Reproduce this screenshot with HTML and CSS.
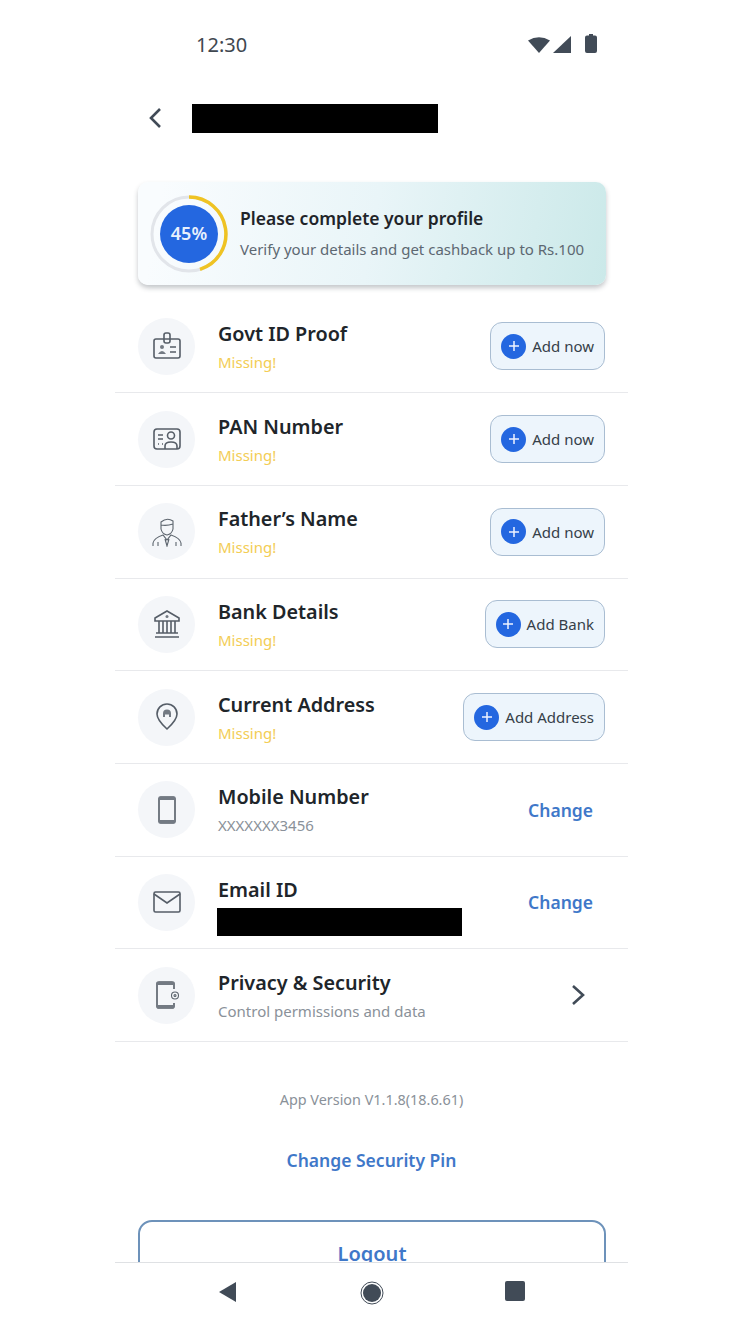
FILE: index.html
```html
<!DOCTYPE html>
<html lang="en">
<head>
<meta charset="utf-8">
<title>Profile</title>
<link rel="stylesheet" href="styles.css">
</head>
<body>
<div class="phone">
  <main class="content">
    <div class="status">
      <span class="time">12:30</span>
      <span class="status-icons">
        <svg width="22" height="16" viewBox="0 0 22 16"><path class="fill" d="M0 3.5Q11-3 22 3.5L11 16z"/></svg>
        <svg width="18" height="17" viewBox="0 0 18 17"><path class="fill" d="M18 0V17H0z"/></svg>
        <svg class="batt" width="12" height="19" viewBox="0 0 12 19"><path class="fill" d="M4 0H8V1.500H10Q12 1.500 12 3.500V17Q12 19 10 19H2Q0 19 0 17V3.500Q0 1.500 2 1.500H4z"/></svg>
      </span>
    </div>
    <header class="topbar">
      <svg class="back" width="16" height="24" viewBox="0 0 16 24"><path class="line2" d="M12 3L3 12L12 21"/></svg>
      <div class="redact title-redact"></div>
    </header>
    <section class="promo">
      <div class="ring">
        <svg width="80" height="80" viewBox="0 0 80 80">
          <circle class="ring-track" cx="40" cy="40" r="37"/>
          <circle class="ring-core" cx="40" cy="40" r="29"/>
          <path class="ring-fg" d="M40 3A37 37 0 0 1 51 75.300"/>
        </svg>
        <span class="ring-num">45%</span>
      </div>
      <div class="promo-text">
        <div class="promo-title">Please complete your profile</div>
        <div class="promo-sub">Verify your details and get cashback up to Rs.100</div>
      </div>
    </section>
    <ul class="list">
      <li class="row">
        <span class="ico"><svg width="30" height="30" viewBox="0 0 30 30"><rect class="line" x="2" y="8" width="26" height="19" rx="2"/><rect class="line" x="12" y="2" width="6" height="10" rx="2"/><circle class="dot" cx="10" cy="16" r="2"/><path class="dot" d="M6 23Q10 17 14 23z"/><path class="line" d="M18 16H24M18 21H24"/></svg></span>
        <div class="info"><div class="name">Govt ID Proof</div><div class="missing">Missing!</div></div>
        <a class="add"><span class="plus"><svg width="12" height="12" viewBox="0 0 12 12"><path class="plus-mark" d="M6 1V11M1 6H11"/></svg></span>Add now</a>
      </li>
      <li class="row">
        <span class="ico"><svg width="30" height="30" viewBox="0 0 30 30"><rect class="line" x="2" y="5" width="26" height="20" rx="3"/><path class="line" d="M6 11H11M6 15H11M6 20H7M10 20H11"/><circle class="line" cx="19" cy="11.500" r="3.500"/><path class="line" d="M13 25V22Q13 18 19 18Q25 18 25 22V25"/></svg></span>
        <div class="info"><div class="name">PAN Number</div><div class="missing">Missing!</div></div>
        <a class="add"><span class="plus"><svg width="12" height="12" viewBox="0 0 12 12"><path class="plus-mark" d="M6 1V11M1 6H11"/></svg></span>Add now</a>
      </li>
      <li class="row">
        <span class="ico"><svg width="30" height="30" viewBox="0 0 30 30"><path class="thin" d="M9 5Q15 0 21 4V12Q20 17 15 18Q10 17 9 12zM9 8Q15 9 21 7"/><path class="thin" d="M1 29V26Q2 21 11 18L15 23L19 18Q28 21 29 26V29M6 29V25M24 29V25M13 22L15 29L17 22"/></svg></span>
        <div class="info"><div class="name">Father’s Name</div><div class="missing">Missing!</div></div>
        <a class="add"><span class="plus"><svg width="12" height="12" viewBox="0 0 12 12"><path class="plus-mark" d="M6 1V11M1 6H11"/></svg></span>Add now</a>
      </li>
      <li class="row">
        <span class="ico"><svg width="30" height="30" viewBox="0 0 30 30"><path class="line" d="M15 2L27 9V12H3V9zM7 12V24M11 12V24M15 12V24M19 12V24M23 12V24M4 24H26M3 28H27"/><circle class="dot" cx="15" cy="7.500" r="1.500"/></svg></span>
        <div class="info"><div class="name">Bank Details</div><div class="missing">Missing!</div></div>
        <a class="add"><span class="plus"><svg width="12" height="12" viewBox="0 0 12 12"><path class="plus-mark" d="M6 1V11M1 6H11"/></svg></span>Add Bank</a>
      </li>
      <li class="row">
        <span class="ico"><svg width="30" height="30" viewBox="0 0 30 30"><path class="line" d="M15 27Q5 18 5 12A10 10 0 0 1 25 12Q25 18 15 27z"/><path class="dot" d="M11 11.500Q11 7.500 15 7.500Q19 7.500 19 11.500V15H17V12.500H13V15H11z"/></svg></span>
        <div class="info"><div class="name">Current Address</div><div class="missing">Missing!</div></div>
        <a class="add"><span class="plus"><svg width="12" height="12" viewBox="0 0 12 12"><path class="plus-mark" d="M6 1V11M1 6H11"/></svg></span>Add Address</a>
      </li>
      <li class="row">
        <span class="ico"><svg width="30" height="30" viewBox="0 0 30 30"><rect class="line" x="7" y="2" width="16" height="26" rx="1.500"/><path class="dot" d="M7 2H23V5H7zM7 25H23V28H7z"/></svg></span>
        <div class="info"><div class="name">Mobile Number</div><div class="value">XXXXXXX3456</div></div>
        <a class="link">Change</a>
      </li>
      <li class="row">
        <span class="ico"><svg width="30" height="30" viewBox="0 0 30 30"><rect class="line" x="2" y="5" width="26" height="20" rx="1.500"/><path class="line" d="M2 7L15 16L28 7"/></svg></span>
        <div class="info"><div class="name">Email ID</div><div class="redact email-redact"></div></div>
        <a class="link">Change</a>
      </li>
      <li class="row">
        <span class="ico"><svg width="30" height="30" viewBox="0 0 30 30"><path class="line" d="M22 9V3.500Q22 2 20 2H7Q5 2 5 3.500V26.500Q5 28 7 28H20Q22 28 22 26.500V23"/><path class="dot" d="M5 2H22V5H5zM5 25H22V28H5z"/><circle class="thin" cx="23" cy="15.500" r="3.500"/><circle class="thin" cx="23" cy="15.500" r="1"/></svg></span>
        <div class="info"><div class="name">Privacy &amp; Security</div><div class="value">Control permissions and data</div></div>
        <svg class="chev" width="16" height="24" viewBox="0 0 16 24"><path class="line2" d="M3 3L13 12L3 21"/></svg>
      </li>
    </ul>
    <div class="version">App Version V1.1.8(18.6.61)</div>
    <a class="pin">Change Security Pin</a>
    <button class="logout">Logout</button>
  </main>
  <nav class="navbar">
    <svg width="20" height="22" viewBox="0 0 20 22"><path class="fill" d="M18 1V21L1 11z"/></svg>
    <svg width="24" height="24" viewBox="0 0 24 24"><circle class="home-ring" cx="12" cy="12" r="11"/><circle class="fill" cx="12" cy="12" r="9"/></svg>
    <svg width="20" height="20" viewBox="0 0 20 20"><rect class="fill" width="20" height="20" rx="2"/></svg>
  </nav>
</div>
</body>
</html>
```
FILE: styles.css
```css
* { box-sizing: border-box; }
html, body { margin: 0; padding: 0; background: #fff; }
body { font-family: "Noto Sans", "Open Sans", sans-serif; color: #1f2429; }
.phone { width: 513px; height: 1334px; margin-left: 115px; display: flex; flex-direction: column; overflow: hidden; }
.content { height: 1262px; flex: none; overflow: hidden; }
.status { height: 82px; padding: 33px 31px 0 81px; display: flex; justify-content: space-between; align-items: flex-start; }
.time { font-size: 20px; line-height: 24px; color: #3f4750; }
.status-icons { display: flex; align-items: flex-end; gap: 3px; padding-top: 1px; }
.batt { margin-left: 11px; }
.fill { fill: #414b57; }
.line { fill: none; stroke: #555d67; stroke-width: 1.600; }
.line2 { fill: none; stroke: #414b57; stroke-width: 2.600; }
.thin { fill: none; stroke: #5c646d; stroke-width: 1.100; }
.dot { fill: #737a83; }
.topbar { height: 72px; padding-left: 33px; display: flex; align-items: center; gap: 28px; }
.redact { background: #000; }
.title-redact { width: 246px; height: 29px; }
.promo { width: 468px; height: 103px; margin: 28px 0 0 23px; padding-left: 11px; display: flex; align-items: center; gap: 11px; border-radius: 10px; background: linear-gradient(100deg, #f9fcfe 5%, #e9f5f8 50%, #cbe9e9 100%); box-shadow: 0 3px 5px rgba(40, 50, 60, .28); }
.ring { position: relative; width: 80px; height: 80px; flex: none; display: flex; align-items: center; justify-content: center; }
.ring svg { position: absolute; inset: 0; }
.ring-track { fill: none; stroke: #e2e5ea; stroke-width: 3; }
.ring-core { fill: #2467e0; }
.ring-fg { fill: none; stroke: #efc323; stroke-width: 3.500; }
.ring-num { position: relative; top: -1px; color: #e8f0fd; font-size: 18px; font-weight: 600; }
.promo-text { display: flex; flex-direction: column; gap: 8px; margin-top: -2px; }
.promo-title { font-size: 17.500px; line-height: 24px; font-weight: 600; color: #1f2429; }
.promo-sub { font-size: 15px; line-height: 22px; color: #5d6872; white-space: nowrap; }
.list { list-style: none; margin: 15.500px 0 0; padding: 0; }
.row { height: 92.700px; padding: 0 23px; display: flex; align-items: center; border-bottom: 1.500px solid #e8e9ec; }
.ico { width: 57px; height: 57px; flex: none; border-radius: 50%; background: #f4f6f9; display: flex; align-items: center; justify-content: center; margin-right: 23px; }
.info { flex: 1; min-width: 0; display: flex; flex-direction: column; gap: 4px; margin-top: 1px; }
.name { font-size: 19.800px; line-height: 26px; font-weight: 600; color: #20252a; white-space: nowrap; }
.missing { font-size: 15px; line-height: 22px; color: #f3cd55; }
.value { font-size: 15px; line-height: 22px; color: #8a9199; white-space: nowrap; }
.email-redact { width: 245px; height: 28px; margin: 1px 0 -7px -1px; }
.add { height: 48px; padding: 0 10px; display: flex; align-items: center; gap: 6px; border: 1.500px solid #a9bdd2; border-radius: 12px; background: #edf5fc; font-size: 15px; color: #363f49; white-space: nowrap; }
.plus { width: 25px; height: 25px; border-radius: 50%; background: #2467e0; display: flex; align-items: center; justify-content: center; }
.plus-mark { fill: none; stroke: #eef4ff; stroke-width: 1.500; }
.link { padding-right: 12px; font-size: 17.500px; font-weight: 600; color: #3f78c9; }
.chev { margin-right: 19px; }
.version { margin-top: 47px; text-align: center; font-size: 14.400px; line-height: 22px; color: #8a9199; }
.pin { display: block; margin-top: 37px; text-align: center; font-size: 17.500px; line-height: 24px; font-weight: 600; color: #3f78c9; }
.logout { display: flex; justify-content: center; width: 468px; height: 80px; margin: 48px 0 0 23px; padding: 18px 0 0; border: 2px solid #6d92ba; border-radius: 14px; background: #fff; font: 600 20px/28px "Noto Sans", sans-serif; color: #3f78c9; }
.navbar { height: 72px; flex: none; border-top: 1.500px solid #dfe1e4; display: flex; align-items: flex-start; justify-content: space-between; padding: 18px 103px 0 103px; background: #fff; }
.home-ring { fill: none; stroke: #414b57; stroke-width: 1; }
```
